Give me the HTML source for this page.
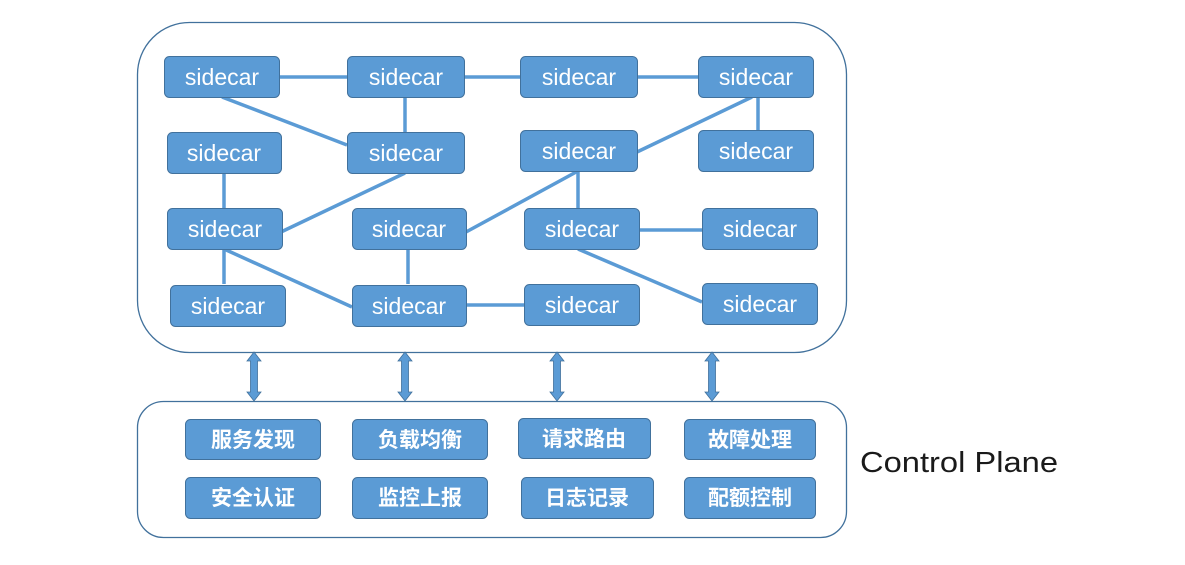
<!DOCTYPE html>
<html><head><meta charset="utf-8"><style>
html,body{margin:0;padding:0;background:#fff;width:1185px;height:565px;overflow:hidden}
svg text{font-family:"Liberation Sans","Noto Sans CJK SC",sans-serif}
</style></head><body>
<svg width="1185" height="565" viewBox="0 0 1185 565" xmlns="http://www.w3.org/2000/svg">
<rect x="137.5" y="22.5" width="709" height="330" rx="52" fill="#fff" stroke="#41719c" stroke-width="1.3"/>
<rect x="137.5" y="401.5" width="709" height="136" rx="26" fill="#fff" stroke="#41719c" stroke-width="1.3"/>
<g stroke="#5b9bd5" stroke-width="3.5" fill="none">
<line x1="279" y1="77" x2="347" y2="77"/>
<line x1="464" y1="77" x2="520" y2="77"/>
<line x1="637" y1="77" x2="698" y2="77"/>
<line x1="222" y1="97" x2="347" y2="145"/>
<line x1="405" y1="97" x2="405" y2="132"/>
<line x1="758" y1="97" x2="758" y2="130"/>
<line x1="224" y1="173" x2="224" y2="208"/>
<line x1="405" y1="173" x2="281" y2="232"/>
<line x1="637" y1="152" x2="752" y2="97"/>
<line x1="578" y1="171" x2="466" y2="232"/>
<line x1="578" y1="171" x2="578" y2="208"/>
<line x1="639" y1="230" x2="702" y2="230"/>
<line x1="578" y1="249" x2="702" y2="302"/>
<line x1="224" y1="249" x2="224" y2="284"/>
<line x1="224" y1="249" x2="352" y2="307"/>
<line x1="408" y1="249" x2="408" y2="284"/>
<line x1="466" y1="305" x2="524" y2="305"/>
</g>
<g fill="#5b9bd5" stroke="#41719c" stroke-width="1">
<rect x="164.5" y="56.5" width="115" height="41" rx="5"/>
<rect x="347.5" y="56.5" width="117" height="41" rx="5"/>
<rect x="520.5" y="56.5" width="117" height="41" rx="5"/>
<rect x="698.5" y="56.5" width="115" height="41" rx="5"/>
<rect x="167.5" y="132.5" width="114" height="41" rx="5"/>
<rect x="347.5" y="132.5" width="117" height="41" rx="5"/>
<rect x="520.5" y="130.5" width="117" height="41" rx="5"/>
<rect x="698.5" y="130.5" width="115" height="41" rx="5"/>
<rect x="167.5" y="208.5" width="115" height="41" rx="5"/>
<rect x="352.5" y="208.5" width="114" height="41" rx="5"/>
<rect x="524.5" y="208.5" width="115" height="41" rx="5"/>
<rect x="702.5" y="208.5" width="115" height="41" rx="5"/>
<rect x="170.5" y="285.5" width="115" height="41" rx="5"/>
<rect x="352.5" y="285.5" width="114" height="41" rx="5"/>
<rect x="524.5" y="284.5" width="115" height="41" rx="5"/>
<rect x="702.5" y="283.5" width="115" height="41" rx="5"/>
<rect x="185.5" y="419.5" width="135" height="40" rx="5"/>
<rect x="352.5" y="419.5" width="135" height="40" rx="5"/>
<rect x="518.5" y="418.5" width="132" height="40" rx="5"/>
<rect x="684.5" y="419.5" width="131" height="40" rx="5"/>
<rect x="185.5" y="477.5" width="135" height="41" rx="5"/>
<rect x="352.5" y="477.5" width="135" height="41" rx="5"/>
<rect x="521.5" y="477.5" width="132" height="41" rx="5"/>
<rect x="684.5" y="477.5" width="131" height="41" rx="5"/>
</g>
<g fill="#fff" font-size="23" text-anchor="middle">
<text x="222" y="85">sidecar</text>
<text x="406" y="85">sidecar</text>
<text x="579" y="85">sidecar</text>
<text x="756" y="85">sidecar</text>
<text x="224" y="161">sidecar</text>
<text x="406" y="161">sidecar</text>
<text x="579" y="159">sidecar</text>
<text x="756" y="159">sidecar</text>
<text x="225" y="237">sidecar</text>
<text x="409" y="237">sidecar</text>
<text x="582" y="237">sidecar</text>
<text x="760" y="237">sidecar</text>
<text x="228" y="314">sidecar</text>
<text x="409" y="314">sidecar</text>
<text x="582" y="313">sidecar</text>
<text x="760" y="312">sidecar</text>
</g>
<g fill="#fff" font-size="21" font-weight="bold" text-anchor="middle">
<text x="253" y="447">服务发现</text>
<text x="420" y="447">负载均衡</text>
<text x="584" y="446">请求路由</text>
<text x="750" y="447">故障处理</text>
<text x="253" y="505">安全认证</text>
<text x="420" y="505">监控上报</text>
<text x="587" y="505">日志记录</text>
<text x="750" y="505">配额控制</text>
</g>
<g fill="#5b9bd5" stroke="#41719c" stroke-width="0.8">
<path d="M254 352 L261 361 L257.5 361 L257.5 392 L261 392 L254 401 L247 392 L250.5 392 L250.5 361 L247 361 Z"/>
<path d="M405 352 L412 361 L408.5 361 L408.5 392 L412 392 L405 401 L398 392 L401.5 392 L401.5 361 L398 361 Z"/>
<path d="M557 352 L564 361 L560.5 361 L560.5 392 L564 392 L557 401 L550 392 L553.5 392 L553.5 361 L550 361 Z"/>
<path d="M712 352 L719 361 L715.5 361 L715.5 392 L719 392 L712 401 L705 392 L708.5 392 L708.5 361 L705 361 Z"/>
</g>
<text x="860" y="472" font-size="29" fill="#1a1a1a" textLength="198" lengthAdjust="spacingAndGlyphs">Control Plane</text>
</svg>
</body></html>
